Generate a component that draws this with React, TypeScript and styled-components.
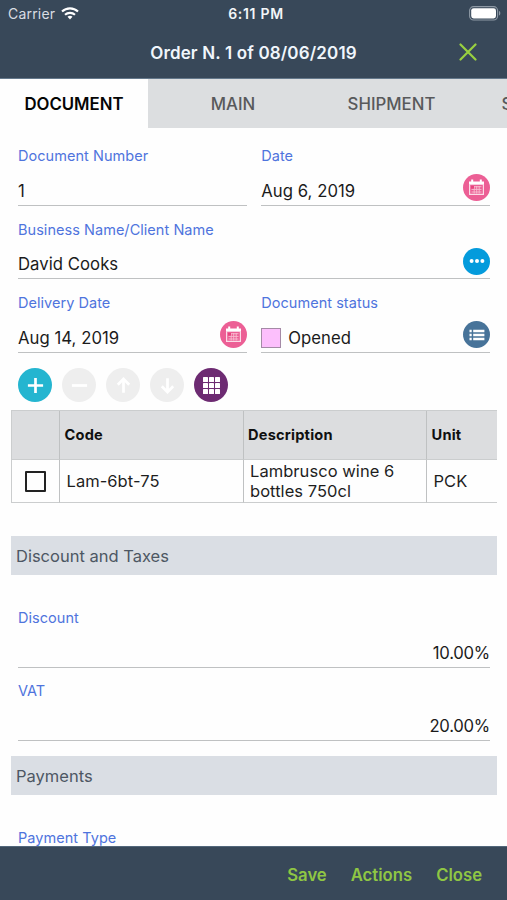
import React from "react";
import styled, { createGlobalStyle } from "styled-components";

const GlobalStyle = createGlobalStyle`
  * { box-sizing: border-box; }
  html, body { margin: 0; padding: 0; overflow: hidden; }
  body { font-family: Inter, "Liberation Sans", sans-serif; background: #fff; }
  button { font-family: inherit; border: 0; padding: 0; background: none; }
  svg { display: block; }
`;

const Screen = styled.div`
  display: flex;
  flex-direction: column;
  width: 507px;
  height: 900px;
  overflow: hidden;
  background: #fefefe;
  color: #1b1b1b;
`;

const StatusBar = styled.div`
  display: grid;
  grid-template-columns: 1fr auto 1fr;
  align-items: center;
  flex: none;
  height: 27px;
  padding: 0 6px 0 8px;
  background: #384859;
  color: #f2f5f8;
`;

const Carrier = styled.span`
  display: flex;
  align-items: center;
  gap: 6px;
  font-size: 14px;
  letter-spacing: 0.2px;
  color: #d8dde3;
`;

const Clock = styled.span`
  font-size: 14px;
  font-weight: 600;
  letter-spacing: 0.7px;
  padding-left: 3px;
`;

const BatterySlot = styled.span`
  justify-self: end;
`;

const TitleBar = styled.header`
  display: grid;
  grid-template-columns: 78px 1fr 78px;
  align-items: center;
  flex: none;
  height: 52px;
  padding-top: 1px;
  background: #384859;
  border-bottom: 1px solid #64788b;
`;

const Title = styled.h1`
  grid-column: 2;
  margin: 0;
  text-align: center;
  font-size: 17px;
  font-weight: 600;
  letter-spacing: 0.15px;
  color: #f0f6fc;
`;

const IconButton = styled.button`
  justify-self: center;
  margin-bottom: 2px;
`;

const Tabs = styled.nav`
  display: flex;
  flex: none;
  height: 49px;
  background: #dcdee0;
  overflow: hidden;
`;

const Tab = styled.button<{ $width: number; $active?: boolean; $start?: boolean }>`
  flex: none;
  width: ${(p) => p.$width}px;
  padding-left: ${(p) => (p.$start ? 36.5 : 0)}px;
  text-align: ${(p) => (p.$start ? "left" : "center")};
  background: ${(p) => (p.$active ? "#fefefe" : "transparent")};
  color: ${(p) => (p.$active ? "#050505" : "#58595b")};
  font-size: 16.8px;
  font-weight: ${(p) => (p.$active ? 600 : 500)};
`;

const Content = styled.main`
  flex: 1;
  min-height: 0;
  overflow: hidden;
  padding: 4.6px 10px 0 11px;
`;

const FieldGrid = styled.div`
  display: grid;
  grid-template-columns: 1fr 1fr;
  grid-auto-rows: 73.4px;
  column-gap: 14.5px;
  padding: 0 7px;
`;

const FieldBox = styled.div<{ $wide?: boolean }>`
  display: flex;
  flex-direction: column;
  grid-column: ${(p) => (p.$wide ? "1 / -1" : "auto")};
  border-bottom: 1px solid #bfc1c2;
`;

const Label = styled.label`
  height: 38px;
  padding-top: 14.6px;
  font-size: 14.5px;
  line-height: 18px;
  letter-spacing: 0.04px;
  color: #4f74dd;
  white-space: nowrap;
`;

const ValueRow = styled.div<{ $right?: boolean }>`
  display: flex;
  align-items: center;
  justify-content: ${(p) => (p.$right ? "flex-end" : "space-between")};
  flex: 1;
`;

const Value = styled.span<{ $right?: boolean }>`
  display: flex;
  align-items: center;
  gap: 7px;
  padding-top: 6.6px;
  font-size: 16.7px;
  line-height: 20px;
  letter-spacing: ${(p) => (p.$right ? -0.25 : 0.05)}px;
`;

const Swatch = styled.span`
  width: 20px;
  height: 20px;
  background: #fcbffc;
  border: 1px solid #a48aa6;
`;

const RoundAction = styled.button<{ $size: number; $color: string }>`
  display: grid;
  place-items: center;
  flex: none;
  width: ${(p) => p.$size}px;
  height: ${(p) => p.$size}px;
  border-radius: 50%;
  background: ${(p) => p.$color};
`;

const Toolbar = styled.div`
  display: flex;
  gap: 10px;
  padding: 15.7px 7px 7.7px;
`;

const Table = styled.div`
  display: grid;
  grid-template-columns: 48px 183.5px 183.5px 70px;
  grid-template-rows: 49px 43px;
  border-top: 1px solid #cbcdce;
  border-left: 1px solid #cbcdce;
`;

const Cell = styled.div<{ $head?: boolean; $last?: boolean; $center?: boolean }>`
  display: flex;
  align-items: center;
  justify-content: ${(p) => (p.$center ? "center" : "flex-start")};
  padding-left: ${(p) => (p.$center ? 0 : p.$head ? 4.5 : 6.5)}px;
  border-right: ${(p) => (p.$last ? 0 : 1)}px solid #bfc1c2;
  border-bottom: 1px solid #cbcdce;
  background: ${(p) => (p.$head ? "#dcdddf" : "transparent")};
  font-size: ${(p) => (p.$head ? 14.6 : 16.5)}px;
  font-weight: ${(p) => (p.$head ? 700 : 400)};
  letter-spacing: ${(p) => (p.$head ? 0.2 : 0.05)}px;
  line-height: 20px;
  white-space: nowrap;
  color: ${(p) => (p.$head ? "#101010" : "#1e1e1e")};
`;

const Checkbox = styled.span`
  width: 21px;
  height: 21px;
  border: 2px solid #222;
  border-radius: 1px;
`;

const Section = styled.h2<{ $top: number }>`
  height: 39px;
  margin: ${(p) => p.$top}px 0 0;
  padding-left: 5px;
  background: #dadee4;
  color: #4d5763;
  font-size: 16.5px;
  font-weight: 400;
  line-height: 40px;
`;

const SectionBody = styled.div`
  padding-top: 19.4px;
`;

const Footer = styled.footer`
  display: flex;
  align-items: center;
  justify-content: flex-end;
  gap: 24px;
  flex: none;
  height: 54px;
  padding: 2px 25px 0 0;
  background: #384859;
  border-top: 1px solid #52677b;
`;

const FooterButton = styled.button`
  font-size: 16.7px;
  font-weight: 600;
  color: #8fc644;
`;

const WifiIcon = () => (
  <svg width="18" height="13" viewBox="0 0 18 13" fill="none" stroke="#fff" strokeWidth="2.1">
    <path d="M1 4.6C5.4.3 12.6.3 17 4.6" />
    <path d="M4 7.8c2.8-2.6 7.2-2.6 10 0" />
    <path d="M6.5 9.8c1.4-1.3 3.6-1.3 5 0L9 12.6z" fill="#fff" stroke="none" />
  </svg>
);

const BatteryIcon = () => (
  <svg width="32" height="15" viewBox="0 0 32 15">
    <rect x="0.6" y="0.6" width="28" height="13.4" rx="4" fill="none" stroke="#8e99a5" strokeWidth="1.1" />
    <rect x="2.2" y="2.2" width="24.8" height="10.2" rx="2.4" fill="#fff" />
    <path d="M30 5v4.6c1.8-.5 1.8-4.1 0-4.6z" fill="#8e99a5" />
  </svg>
);

const CloseIcon = () => (
  <svg width="18" height="18" viewBox="0 0 18 18" stroke="#99d040" strokeWidth="2.2" strokeLinecap="round">
    <path d="M1.5 1.5l15 15M16.5 1.5l-15 15" />
  </svg>
);

const CalendarIcon = () => (
  <svg width="17" height="17" viewBox="0 0 17 17">
    <path d="M1 2.5h15v3.2H1z" fill="#fff" />
    <path d="M4.2.6v3.2M12.8.6v3.2" stroke="#fff" strokeWidth="2" />
    <path d="M1.6 5v10.4h13.8V5" fill="none" stroke="#fbdbe7" strokeWidth="1.2" />
    <path d="M3.5 7.7h10M3.5 10.4h10M3.5 13h10M6.2 7v7.5M8.7 7v7.5M11.2 7v7.5" stroke="#f8bdd1" strokeWidth="0.9" />
    <rect x="3" y="7" width="3" height="2.6" fill="#e8447f" />
  </svg>
);

const DotsIcon = () => (
  <svg width="16" height="6" viewBox="0 0 16 6" fill="#fff">
    <circle cx="2.6" cy="3" r="2" />
    <circle cx="8" cy="3" r="2" />
    <circle cx="13.4" cy="3" r="2" />
  </svg>
);

const ListIcon = () => (
  <svg width="16" height="12" viewBox="0 0 16 12" stroke="#fff" strokeWidth="2.3">
    <path d="M.5 2h2.2M.5 6h2.2M.5 10h2.2M4.2 2h11.2M4.2 6h11.2M4.2 10h11.2" />
  </svg>
);

const strokes = {
  plus: "M8.5 .9v15.2M.9 8.5h15.2",
  minus: "M.9 8.5h15.2",
  up: "M8.5 15.8V2M2.8 7.7l5.7-5.8 5.7 5.8",
  down: "M8.5 1.2V15M2.8 9.3l5.7 5.8 5.7-5.8",
};

const StrokeIcon = ({ name }: { name: keyof typeof strokes }) => (
  <svg width="17" height="17" viewBox="0 0 17 17" fill="none" stroke="#fff" strokeWidth="2.7">
    <path d={strokes[name]} />
  </svg>
);

const GridIcon = () => (
  <svg width="17" height="17" viewBox="0 0 17 17" fill="#fff">
    {[0, 6, 12].map((y) =>
      [0, 6, 12].map((x) => <rect key={`${x}-${y}`} x={x} y={y} width="5" height="5" rx="0.6" />)
    )}
  </svg>
);

interface FieldProps {
  label: string;
  wide?: boolean;
  right?: boolean;
  swatch?: boolean;
  value?: string;
  actionColor?: string;
  icon?: React.ReactNode;
}

const Field = ({ label, wide, right, swatch, value, actionColor, icon }: FieldProps) => (
  <FieldBox $wide={wide}>
    <Label>{label}</Label>
    <ValueRow $right={right}>
      <Value $right={right}>
        {swatch && <Swatch />}
        {value}
      </Value>
      {icon && (
        <RoundAction $size={27} $color={actionColor || "#ec5f95"}>
          {icon}
        </RoundAction>
      )}
    </ValueRow>
  </FieldBox>
);

export default function App() {
  return (
    <>
      <GlobalStyle />
      <Screen>
        <StatusBar>
          <Carrier>
            Carrier <WifiIcon />
          </Carrier>
          <Clock>6:11 PM</Clock>
          <BatterySlot>
            <BatteryIcon />
          </BatterySlot>
        </StatusBar>
        <TitleBar>
          <Title>Order N. 1 of 08/06/2019</Title>
          <IconButton aria-label="Close order">
            <CloseIcon />
          </IconButton>
        </TitleBar>
        <Tabs>
          <Tab $width={148} $active>DOCUMENT</Tab>
          <Tab $width={170}>MAIN</Tab>
          <Tab $width={147}>SHIPMENT</Tab>
          <Tab $width={147} $start>S</Tab>
        </Tabs>
        <Content>
          <FieldGrid>
            <Field label="Document Number" value="1" />
            <Field label="Date" value="Aug 6, 2019" icon={<CalendarIcon />} />
            <Field label="Business Name/Client Name" value="David Cooks" wide actionColor="#049bdc" icon={<DotsIcon />} />
            <Field label="Delivery Date" value="Aug 14, 2019" icon={<CalendarIcon />} />
            <Field label="Document status" value="Opened" swatch actionColor="#477399" icon={<ListIcon />} />
          </FieldGrid>
          <Toolbar>
            <RoundAction $size={34} $color="#24b5d0"><StrokeIcon name="plus" /></RoundAction>
            <RoundAction $size={34} $color="#eeeeee"><StrokeIcon name="minus" /></RoundAction>
            <RoundAction $size={34} $color="#eeeeee"><StrokeIcon name="up" /></RoundAction>
            <RoundAction $size={34} $color="#eeeeee"><StrokeIcon name="down" /></RoundAction>
            <RoundAction $size={34} $color="#6d2b72"><GridIcon /></RoundAction>
          </Toolbar>
          <Table>
            <Cell $head />
            <Cell $head>Code</Cell>
            <Cell $head>Description</Cell>
            <Cell $head $last>Unit</Cell>
            <Cell $center><Checkbox /></Cell>
            <Cell>Lam-6bt-75</Cell>
            <Cell>Lambrusco wine 6<br />bottles 750cl</Cell>
            <Cell $last>PCK</Cell>
          </Table>
          <Section $top={32.8}>Discount and Taxes</Section>
          <SectionBody>
            <FieldGrid>
              <Field label="Discount" value="10.00%" wide right />
              <Field label="VAT" value="20.00%" wide right />
            </FieldGrid>
          </SectionBody>
          <Section $top={14.8}>Payments</Section>
          <SectionBody>
            <FieldGrid>
              <Field label="Payment Type" wide />
            </FieldGrid>
          </SectionBody>
        </Content>
        <Footer>
          <FooterButton>Save</FooterButton>
          <FooterButton>Actions</FooterButton>
          <FooterButton>Close</FooterButton>
        </Footer>
      </Screen>
    </>
  );
}
